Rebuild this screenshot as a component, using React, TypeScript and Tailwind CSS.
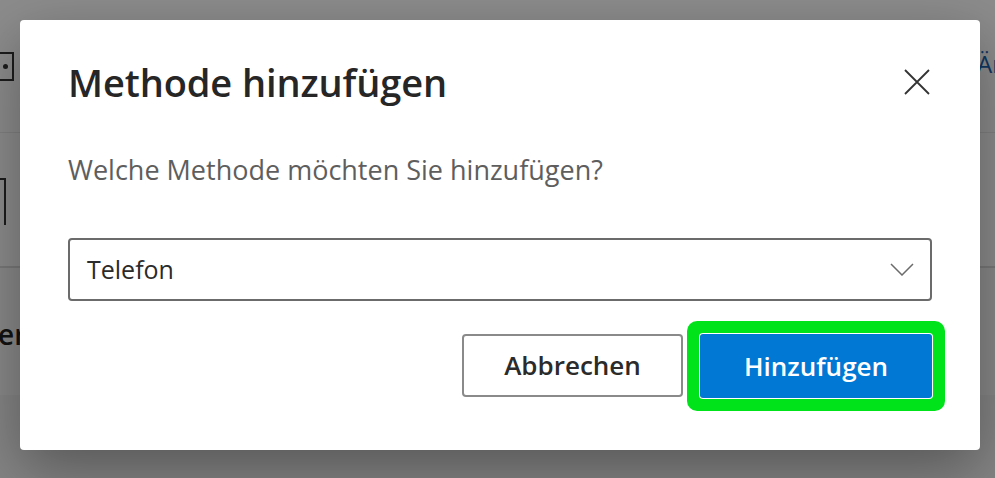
import React from "react";

export default function App() {
  const font = { fontFamily: '"Open Sans", "Noto Sans", Arial, sans-serif' };
  return (
    <div className="relative w-[995px] h-[478px] overflow-hidden bg-white" style={font}>
      {/* background page */}
      <div className="flex flex-col w-full h-full">
        <div className="h-[133px] border-b border-[#ececec] flex items-start justify-between pt-[30px]">
          <div className="ml-[-16px] mt-[22px] w-[30px] h-[29px] border-2 border-[#333] flex items-center justify-end pr-[4px]">
            <div className="w-[5px] h-[5px] rounded-full bg-[#333]" />
          </div>
          <div className="mr-[-12px] mt-[22px] text-[24px] text-[#1a64b4] leading-none">Än</div>
        </div>
        <div className="h-[135px] border-b-2 border-[#dcdcdc] flex items-start pt-[45px]">
          <div className="ml-[-20px] w-[26px] h-[47px] border-t-2 border-r-2 border-[#333]" />
        </div>
        <div className="h-[127px] bg-[#f9f9f9] flex items-start pt-[52px]">
          <div className="ml-[-2px] text-[28px] font-semibold text-[#222] leading-none">er</div>
        </div>
        <div className="flex-1 bg-[#f3f3f3]" />
      </div>
      {/* overlay */}
      <div className="absolute inset-0 bg-black/[0.45]" />
      {/* dialog */}
      <div className="absolute left-[20px] top-[20px] w-[960px] h-[430px] bg-white rounded-[4px] shadow-[0_20px_60px_rgba(0,0,0,0.35)] flex flex-col px-[48px]">
        <div className="flex items-start justify-between mt-[36px]">
          <h1 className="text-[38px] font-semibold text-[#262626] leading-[52px] tracking-[-0.1px]">Methode hinzufügen</h1>
          <button className="mt-[13px] mr-[2px] w-[26px] h-[26px] flex items-center justify-center">
            <svg width="26" height="26" viewBox="0 0 26 26" fill="none" stroke="#333" strokeWidth="1.8">
              <path d="M1 1 L25 25 M25 1 L1 25" />
            </svg>
          </button>
        </div>
        <p className="mt-[44px] text-[27px] text-[#5e5e5e] leading-[36px]">Welche Methode möchten Sie hinzufügen?</p>
        <div className="mt-[50px] h-[63px] border-2 border-[#6b6b6b] rounded-[4px] flex items-center justify-between pl-[17px] pr-[16px]">
          <span className="text-[25px] text-[#2b2b2b]">Telefon</span>
          <svg width="24" height="13" viewBox="0 0 24 13" fill="none" stroke="#6b6b6b" strokeWidth="1.5">
            <path d="M1 1 L12 12 L23 1" />
          </svg>
        </div>
        <div className="mt-[33px] flex justify-end items-start gap-[17px]">
          <button className="w-[221px] h-[63px] border-2 border-[#8a8a8a] rounded-[4px] bg-white text-[26px] font-semibold text-[#2b2b2b]">
            Abbrechen
          </button>
          <button className="w-[232px] h-[64px] rounded-[3px] bg-[#0078d4] text-[26px] font-semibold text-white shadow-[0_0_0_1px_#ffffff,0_0_0_13px_#00e31b]">
            Hinzufügen
          </button>
        </div>
      </div>
    </div>
  );
}
